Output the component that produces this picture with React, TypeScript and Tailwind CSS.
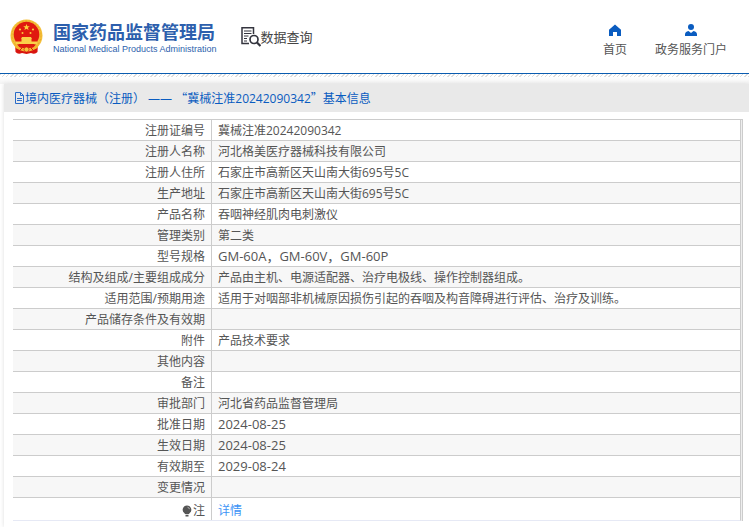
import React from 'react';

type Row = { label: string; value?: string; code?: boolean };

const rows: Row[] = [
  { label: '注册证编号', value: '冀械注准20242090342' },
  { label: '注册人名称', value: '河北格美医疗器械科技有限公司' },
  { label: '注册人住所', value: '石家庄市高新区天山南大街695号5C' },
  { label: '生产地址', value: '石家庄市高新区天山南大街695号5C' },
  { label: '产品名称', value: '吞咽神经肌肉电刺激仪' },
  { label: '管理类别', value: '第二类' },
  { label: '型号规格', value: 'GM-60A，GM-60V，GM-60P', code: true },
  { label: '结构及组成/主要组成成分', value: '产品由主机、电源适配器、治疗电极线、操作控制器组成。' },
  { label: '适用范围/预期用途', value: '适用于对咽部非机械原因损伤引起的吞咽及构音障碍进行评估、治疗及训练。' },
  { label: '产品储存条件及有效期' },
  { label: '附件', value: '产品技术要求' },
  { label: '其他内容' },
  { label: '备注' },
  { label: '审批部门', value: '河北省药品监督管理局' },
  { label: '批准日期', value: '2024-08-25', code: true },
  { label: '生效日期', value: '2024-08-25', code: true },
  { label: '有效期至', value: '2029-08-24', code: true },
  { label: '变更情况' },
];

const Emblem = () => (
  <svg viewBox="0 0 33 36" className="h-9 w-[33px]" aria-hidden="true">
    <path d="M5 24 L5.500 33 Q8 36 12 34 L16.500 35 L21 34 Q25 36 27.500 33 L28 24Z" fill="#d9150f" />
    <circle cx="16.500" cy="16.500" r="16" fill="#f5c03a" />
    <circle cx="16.500" cy="16.500" r="14.500" fill="none" stroke="#eaab28" strokeWidth="1" strokeDasharray="2 1.500" />
    <circle cx="16.500" cy="15.500" r="12.800" fill="#e0190f" />
    <path d="M16.500 5l.9 2.200 2.400.1-1.900 1.500.7 2.300-2.100-1.300-2.100 1.300.7-2.300-1.900-1.500 2.400-.1z" fill="#fbd23c" />
    <circle cx="10" cy="10.500" r="1.100" fill="#fbc93c" />
    <circle cx="23" cy="10.500" r="1.100" fill="#fbc93c" />
    <circle cx="12.500" cy="14" r="1" fill="#fbc93c" />
    <circle cx="20.500" cy="14" r="1" fill="#fbc93c" />
    <path d="M12 18h9l1 2h-11zM11.500 20h10v2.500h5.500v2.500h-21v-2.500h5.500z" fill="#fbd04a" />
    <path d="M7 25.500h19l-3 3.500h-13z" fill="#dd1a10" />
    <path d="M4 25q6 5.500 12.500 3.500q6.500 2 12.500-3.500l-1.500 4q-5.500 3-11 1.500q-5.500 1.500-11-1.500z" fill="#f5b52d" />
    <path d="M9 32l3-3M24 32l-3-3" stroke="#d9150f" />
    <circle cx="16.500" cy="30.500" r="2.500" fill="#f6c43c" stroke="#d9150f" strokeWidth=".7" />
  </svg>
);

const QueryIcon = () => (
  <svg viewBox="0 0 20 20" className="h-5 w-5" fill="none" stroke="#34353f" aria-hidden="true">
    <path d="M8 16.500H1V.8h11.500V7" strokeWidth="1.500" />
    <path d="M3 4h7.500M3 6.500h7.500M3 9h4.500M3 11.500h3M3 14h3" />
    <circle cx="13" cy="12.500" r="4" strokeWidth="1.700" />
    <path d="M16 15.500l3.500 3.500" strokeWidth="2.200" />
  </svg>
);

const HomeIcon = () => (
  <svg viewBox="0 0 12 12" className="h-3 w-3" fill="#0a5cc0" aria-hidden="true">
    <path d="M6 .5L12 5.800V12H8V8H4V12H0V5.800z" />
  </svg>
);

const UserIcon = () => (
  <svg viewBox="0 0 12 12" className="h-3 w-3" fill="#0a5cc0" aria-hidden="true">
    <circle cx="6" cy="3" r="3" />
    <path d="M0 12V10.500Q0 7.500 3.500 7L6 9L8.500 7Q12 7.500 12 10.500V12z" />
  </svg>
);

const FileIcon = () => (
  <svg viewBox="0 0 11 12" className="h-3 w-[11px]" fill="none" stroke="#2a6cc8" aria-hidden="true">
    <path d="M1.500 .5h5l3 3v8h-8zM6.500 .5v3h3M3 6.500h5M3 8.500h5" />
  </svg>
);

const BulbIcon = () => (
  <svg viewBox="0 0 10 12" className="h-3 w-[10px]" fill="#555" aria-hidden="true">
    <path d="M5 .5a4.300 4.300 0 0 1 2.500 7.800L7 9H3l-.5-.7A4.300 4.300 0 0 1 5 .5zM3.500 9.700h3v1.800h-3z" />
    <path d="M5.500 2.200Q7.200 2.500 7.500 4.200" stroke="#ccc" strokeWidth=".8" fill="none" />
  </svg>
);

const labelClass = 'w-[199px] border-r border-[#ccc] pr-[6px] text-right font-normal';

export default function App() {
  return (
    <div className="min-h-screen bg-white font-['Open_Sans','Noto_Sans_CJK_SC',sans-serif] text-xs leading-[18px] text-[#555]">
      <header className="flex items-start justify-between border-b border-[#0a5cb0] pr-[22px] pl-[10px]">
        <div className="flex h-[73px] items-center">
          <Emblem />
          <div className="ml-[10px] pt-1 text-[#2d5fad]">
            <div className="font-['Noto_Sans_CJK_SC',sans-serif] text-lg leading-5 font-bold">国家药品监督管理局</div>
            <div className="pt-px font-['Liberation_Sans',sans-serif] text-[9px] leading-[14px]">
              National Medical Products Administration
            </div>
          </div>
          <div className="ml-6 flex items-center">
            <QueryIcon />
            <span className="font-['Noto_Sans_CJK_SC',sans-serif] text-[13px] text-[#444]">数据查询</span>
          </div>
        </div>
        <nav className="flex gap-7 pt-6">
          <a href="#home" className="flex flex-col items-center gap-[5px]">
            <HomeIcon />
            首页
          </a>
          <a href="#portal" className="flex flex-col items-center gap-[5px]">
            <UserIcon />
            政务服务门户
          </a>
        </nav>
      </header>
      <div className="h-[3px] bg-[repeating-linear-gradient(135deg,#ddd_0_1px,#fff_1px_3px)]" />
      <div className="h-[7px] bg-linear-to-b from-white to-[#f3f3f3]" />

      <main className="ml-1 shadow-[0_0_4px_#ddd]">
        <h1 className="flex h-7 items-center bg-[#e9e9e9] pl-[10px] text-[#0a5cc0]">
          <FileIcon />
          <span>
            境内医疗器械（注册） —— <span className="font-['Noto_Sans_CJK_SC',sans-serif]">“</span>
            冀械注准20242090342<span className="font-['Noto_Sans_CJK_SC',sans-serif]">”</span>
            基本信息
          </span>
        </h1>
        <div className="bg-white pt-[7px] pr-[6px] pb-[6px] pl-[9px]">
          <div className="border-t border-r border-[#ccc] bg-[#eee] pr-px">
            <table className="w-full table-fixed border-separate border-spacing-0 border-r border-b border-r-[#ccc] border-b-[#e6e9f5] bg-white">
              <tbody>
                {rows.map((row) => (
                  <tr key={row.label} className="h-[21px] even:bg-[#f7f7f7]">
                    <th scope="row" className={`${labelClass} border-b pt-[2px]`}>{row.label}</th>
                    <td className={`border-b border-[#ccc] pl-[6px] ${row.code ? 'text-[13px]' : 'pt-[2px]'}`}>
                      {row.value}
                    </td>
                  </tr>
                ))}
                <tr className="h-[22px]">
                  <th scope="row" className={`${labelClass} pt-1`}>
                    <span className="flex items-center justify-end gap-px">
                      <BulbIcon />注
                    </span>
                  </th>
                  <td className="pt-1 pl-[6px]">
                    <a href="#detail" className="text-[#3d94f6]">详情</a>
                  </td>
                </tr>
              </tbody>
            </table>
          </div>
        </div>
      </main>
    </div>
  );
}
